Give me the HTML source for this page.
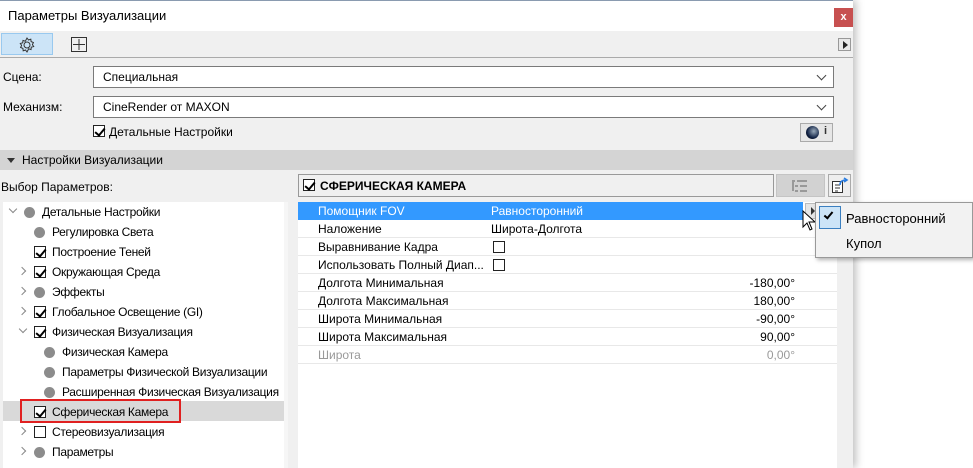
<!DOCTYPE html>
<html><head><meta charset="utf-8"><style>
*{box-sizing:border-box;margin:0;padding:0}
body{width:973px;height:468px;background:#fff;font-family:"Liberation Sans","DejaVu Sans",sans-serif;font-size:12px;color:#000;position:relative;overflow:hidden}
.a{position:absolute}
.win{left:0;top:0;width:853px;height:468px;background:#f0f0f0;box-shadow:3px 0 8px rgba(0,0,0,.25)}
.dd{background:#fff;border:1px solid #7a7a7a;height:22px;padding:3px 0 0 9px}
.dd::after{content:"";position:absolute;right:8px;top:5px;width:6px;height:6px;border-right:1px solid #444;border-bottom:1px solid #444;transform:rotate(45deg)}
.cb{width:12px;height:12px;border:1px solid #222;background:#fff}
.cb.c::after{content:"";position:absolute;left:3px;top:0px;width:4px;height:8px;border-right:2px solid #000;border-bottom:2px solid #000;transform:rotate(40deg)}
.dot{width:11px;height:11px;border-radius:50%;background:#8c8c8c}
.arr{width:6px;height:6px;border-right:1.5px solid #888;border-bottom:1.5px solid #888}
.t{letter-spacing:-0.3px}
.row{left:0;width:539px;height:18px;border-bottom:1px solid #e8e8e8}
.row span{position:absolute;top:2px}
</style></head><body>
<div class="a win"></div>
<div class="a" style="left:0;top:0;width:853px;height:31px;background:#fff;border-top:1px solid #8a9bb0"></div>
<div class="a" style="left:8px;top:8px;font-size:13px">Параметры Визуализации</div>
<div class="a" style="left:834px;top:8px;width:19px;height:19px;background:#c75050;color:#fff;font-size:11px;text-align:center;line-height:18px;font-weight:bold">x</div>
<div class="a" style="left:1px;top:33px;width:52px;height:22px;background:#cce4f7;border:1px solid #99c9ef"></div>
<svg class="a" style="left:18px;top:36px" width="18" height="18" viewBox="0 0 18 18"><circle cx="9" cy="9" r="3" fill="none" stroke="#333"/><path d="M9 2l1.5 2 2.3-.8.3 2.4 2.3.9-1 2.1 1.3 2-2.4.6-.3 2.4-2.3-.8L9 16l-1.5-2-2.3.8-.3-2.4-2.3-.9 1-2.1-1.3-2 2.4-.6.3-2.4 2.3.8z" fill="none" stroke="#333"/></svg>
<svg class="a" style="left:71px;top:37px" width="16" height="16" viewBox="0 0 16 16"><rect x="0.5" y="0.5" width="15" height="14" fill="none" stroke="#333"/><path d="M8 2v11M2 7.5h12" stroke="#333"/></svg>
<div class="a" style="left:838px;top:38px;width:13px;height:13px;border:1px solid #999;background:#e8e8e8"></div>
<div class="a" style="left:843px;top:41px;border-left:5px solid #222;border-top:4px solid transparent;border-bottom:4px solid transparent"></div>
<div class="a" style="left:0;top:57px;width:853px;height:1px;background:#aaa"></div>
<div class="a" style="left:3px;top:70px">Сцена:</div>
<div class="a dd" style="left:93px;top:66px;width:741px">Специальная</div>
<div class="a" style="left:3px;top:100px">Механизм:</div>
<div class="a dd" style="left:93px;top:96px;width:741px">CineRender от MAXON</div>
<div class="a cb c" style="left:93px;top:125px"></div>
<div class="a" style="left:109px;top:125px">Детальные Настройки</div>
<div class="a" style="left:800px;top:123px;width:33px;height:19px;border:1px solid #aaa;background:#e6e6e6"></div>
<div class="a" style="left:806px;top:126px;width:13px;height:13px;border-radius:50%;background:radial-gradient(circle at 60% 40%,#9ab 0,#124 60%,#000)"></div>
<div class="a" style="left:824px;top:125px;font-size:11px;font-weight:bold;color:#333">i</div>
<div class="a" style="left:0;top:150px;width:853px;height:20px;background:#d4d4d4"></div>
<div class="a" style="left:7px;top:158px;border-top:5px solid #333;border-left:4px solid transparent;border-right:4px solid transparent"></div>
<div class="a" style="left:22px;top:153px">Настройки Визуализации</div>
<div class="a" style="left:1px;top:180px">Выбор Параметров:</div>
<div class="a" style="left:3px;top:202px;width:281px;height:266px;background:#fff"></div>
<div class="a" style="left:284px;top:202px;width:4px;height:266px;background:#f6f6f6"></div>
<div class="a" style="left:3px;top:401px;width:281px;height:20px;background:#d9d9d9"></div>
<div class="a" style="left:20px;top:399px;width:161px;height:24px;border:2px solid #e02020"></div>
<div class="t">
<div class="a arr" style="left:10px;top:206px;transform:rotate(45deg)"></div>
<div class="a dot" style="left:24px;top:207px"></div><div class="a" style="left:42px;top:205px">Детальные Настройки</div>
<div class="a dot" style="left:34px;top:227px"></div><div class="a" style="left:52px;top:225px">Регулировка Света</div>
<div class="a cb c" style="left:34px;top:246px"></div><div class="a" style="left:52px;top:245px">Построение Теней</div>
<div class="a arr" style="left:19px;top:268px;transform:rotate(-45deg)"></div><div class="a cb c" style="left:34px;top:266px"></div><div class="a" style="left:52px;top:265px">Окружающая Среда</div>
<div class="a arr" style="left:19px;top:288px;transform:rotate(-45deg)"></div><div class="a dot" style="left:34px;top:287px"></div><div class="a" style="left:52px;top:285px">Эффекты</div>
<div class="a arr" style="left:19px;top:308px;transform:rotate(-45deg)"></div><div class="a cb c" style="left:34px;top:306px"></div><div class="a" style="left:52px;top:305px">Глобальное Освещение (GI)</div>
<div class="a arr" style="left:20px;top:326px;transform:rotate(45deg)"></div><div class="a cb c" style="left:34px;top:326px"></div><div class="a" style="left:52px;top:325px">Физическая Визуализация</div>
<div class="a dot" style="left:44px;top:347px"></div><div class="a" style="left:62px;top:345px">Физическая Камера</div>
<div class="a dot" style="left:44px;top:367px"></div><div class="a" style="left:62px;top:365px">Параметры Физической Визуализации</div>
<div class="a dot" style="left:44px;top:387px"></div><div class="a" style="left:62px;top:385px">Расширенная Физическая Визуализация</div>
<div class="a cb c" style="left:34px;top:406px"></div><div class="a" style="left:52px;top:405px">Сферическая Камера</div>
<div class="a arr" style="left:19px;top:428px;transform:rotate(-45deg)"></div><div class="a cb" style="left:34px;top:426px"></div><div class="a" style="left:52px;top:425px">Стереовизуализация</div>
<div class="a arr" style="left:19px;top:448px;transform:rotate(-45deg)"></div><div class="a dot" style="left:34px;top:447px"></div><div class="a" style="left:52px;top:445px">Параметры</div>
</div>
<div class="a" style="left:298px;top:174px;width:476px;height:23px;border:1px solid #999;background:#f0f0f0"></div>
<div class="a cb c" style="left:303px;top:179px"></div>
<div class="a" style="left:320px;top:179px;font-weight:bold">СФЕРИЧЕСКАЯ КАМЕРА</div>
<div class="a" style="left:776px;top:174px;width:49px;height:23px;background:#d2d2d2;border:1px solid #c4c4c4"></div>
<svg class="a" style="left:791px;top:180px" width="18" height="12"><path d="M1 1h3M6 1h10M4 6h3M9 6h7M4 11h3M9 11h7M2 2v9" stroke="#999" stroke-width="2"/></svg>
<div class="a" style="left:828px;top:174px;width:23px;height:23px;border:1px solid #aaa;background:#eee"></div>
<svg class="a" style="left:831px;top:177px" width="18" height="17"><rect x="1.5" y="4.5" width="10" height="11" fill="#fff" stroke="#333"/><path d="M4 8h5M4 11h5M4 14h3" stroke="#333"/><path d="M9 8c0-4 3-5 6-5M13 1l3 2-3 2" fill="none" stroke="#2a7de1" stroke-width="1.6"/></svg>
<div class="a" style="left:298px;top:202px;width:539px;height:266px;background:#fff">
<div class="a row" style="top:0;background:#3399ff;color:#fff;width:505px;border:0"><span style="left:20px">Помощник FOV</span><span style="left:193px">Равносторонний</span></div>
<div class="a" style="left:507px;top:1px;width:14px;height:16px;background:#e6e6e6;border:1px solid #bbb"></div>
<div class="a" style="left:513px;top:5px;border-left:4px solid #333;border-top:4px solid transparent;border-bottom:4px solid transparent"></div>
<div class="a row" style="top:18px"><span style="left:20px">Наложение</span><span style="left:193px">Широта-Долгота</span></div>
<div class="a row" style="top:36px"><span style="left:20px">Выравнивание Кадра</span></div><div class="a cb" style="left:195px;top:39px"></div>
<div class="a row" style="top:54px"><span style="left:20px">Использовать Полный Диап...</span></div><div class="a cb" style="left:195px;top:57px"></div>
<div class="a row" style="top:72px"><span style="left:20px">Долгота Минимальная</span><span style="right:42px">-180,00°</span></div>
<div class="a row" style="top:90px"><span style="left:20px">Долгота Максимальная</span><span style="right:42px">180,00°</span></div>
<div class="a row" style="top:108px"><span style="left:20px">Широта Минимальная</span><span style="right:42px">-90,00°</span></div>
<div class="a row" style="top:126px"><span style="left:20px">Широта Максимальная</span><span style="right:42px">90,00°</span></div>
<div class="a row" style="top:144px;color:#999"><span style="left:20px">Широта</span><span style="right:42px">0,00°</span></div>
</div>
<svg class="a" style="left:802px;top:210px" width="14" height="22"><path d="M1 1v16l4-4 3 7 2-1-3-7h6z" fill="#fff" stroke="#000"/></svg>
<div class="a" style="left:815px;top:202px;width:158px;height:56px;background:#f2f2f2;border:1px solid #999;box-shadow:2px 2px 4px rgba(0,0,0,.3)"></div>
<div class="a" style="left:819px;top:206px;width:22px;height:23px;background:#cce4f7;border:1px solid #3a7fc0"></div>
<div class="a" style="left:826px;top:210px;width:5px;height:9px;border-right:2px solid #000;border-bottom:2px solid #000;transform:rotate(40deg)"></div>
<div class="a" style="left:846px;top:211px;font-size:13px">Равносторонний</div>
<div class="a" style="left:846px;top:236px;font-size:13px">Купол</div>
</body></html>
